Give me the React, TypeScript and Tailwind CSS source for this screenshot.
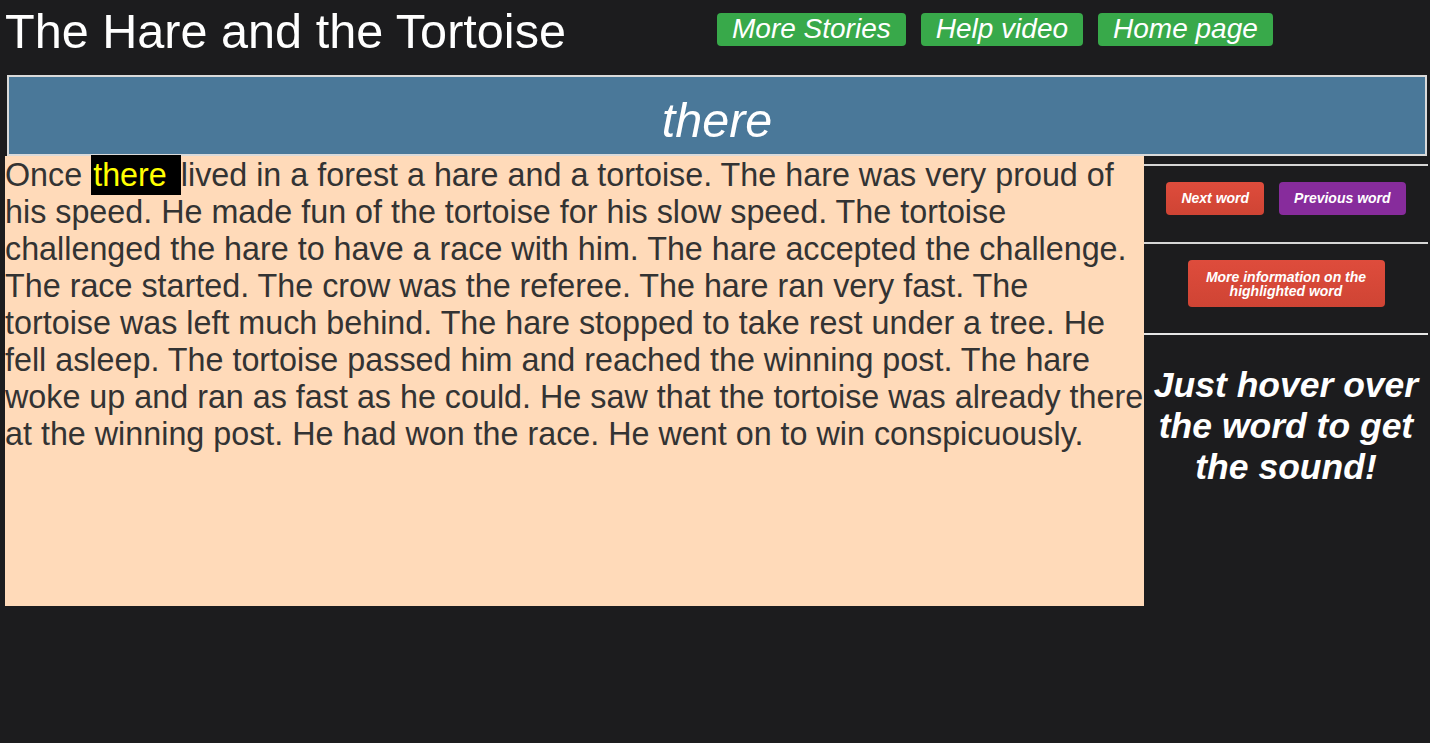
import React from 'react';

const storyLines = [
  'his speed. He made fun of the tortoise for his slow speed. The tortoise',
  'challenged the hare to have a race with him. The hare accepted the challenge.',
  'The race started. The crow was the referee. The hare ran very fast. The',
  'tortoise was left much behind. The hare stopped to take rest under a tree. He',
  'fell asleep. The tortoise passed him and reached the winning post. The hare',
  'woke up and ran as fast as he could. He saw that the tortoise was already there',
  'at the winning post. He had won the race. He went on to win conspicuously.',
];

const navLinks = ['More Stories', 'Help video', 'Home page'];

export default function App() {
  return (
    <div className="min-h-screen w-full bg-[#1c1c1e] font-['Liberation_Sans',Arial,sans-serif]">
      {/* header */}
      <header className="flex h-[75px] pl-[5px]">
        <h1 className="w-[712px] pt-[4px] text-[48.6px] leading-[55px] font-normal text-white">
          The Hare and the Tortoise
        </h1>
        <nav className="flex items-start gap-[15px] pt-[13px]">
          {navLinks.map((label) => (
            <a
              key={label}
              href="#"
              className="h-[33px] rounded-[4px] bg-[#38a94a] px-[15px] text-[28px] italic leading-[32px] text-white"
            >
              {label}
            </a>
          ))}
        </nav>
      </header>

      {/* current word */}
      <div className="ml-[7px] h-[81px] w-[1420px] border-2 border-[#dadada] bg-[#4a7899] pt-[16px] text-center text-[48.5px] italic leading-[55px] text-white">
        there
      </div>

      <div className="flex pl-[5px]">
        {/* story */}
        <div className="h-[450px] w-[1139px] whitespace-nowrap bg-[#ffdab9] pt-[1px] text-[32.3px] leading-[37px] text-[#333333]">
          <div>
            Once{' '}
            <span className="bg-black py-[2px] pl-[2px] pr-[5px] text-[#ffff00]">there </span>
            lived in a forest a hare and a tortoise. The hare was very proud of
          </div>
          {storyLines.map((line) => (
            <div key={line}>{line}</div>
          ))}
        </div>

        {/* controls */}
        <aside className="w-[284px] pt-[8px]">
          <div className="flex justify-center gap-[15px] border-y-2 border-[#d6d6d6] pt-[16px] pb-[27px]">
            <button className="h-[33px] rounded-[4px] bg-gradient-to-b from-[#de4c3c] to-[#cf4434] px-[15px] text-[14px] font-bold italic text-white">
              Next word
            </button>
            <button className="h-[33px] rounded-[4px] bg-[#872c9c] px-[15px] text-[14px] font-bold italic text-white">
              Previous word
            </button>
          </div>
          <div className="flex justify-center border-b-2 border-[#e6e6e6] pt-[16px] pb-[26px]">
            <button className="h-[47px] w-[197px] rounded-[4px] bg-gradient-to-b from-[#de4c3c] to-[#cf4434] text-[14px] font-bold italic leading-[14px] text-white">
              More information on the
              <br />
              highlighted word
            </button>
          </div>
          <p className="pt-[30px] text-center text-[35.5px] font-bold italic leading-[41px] text-white">
            Just hover over the word to get the sound!
          </p>
        </aside>
      </div>
    </div>
  );
}
